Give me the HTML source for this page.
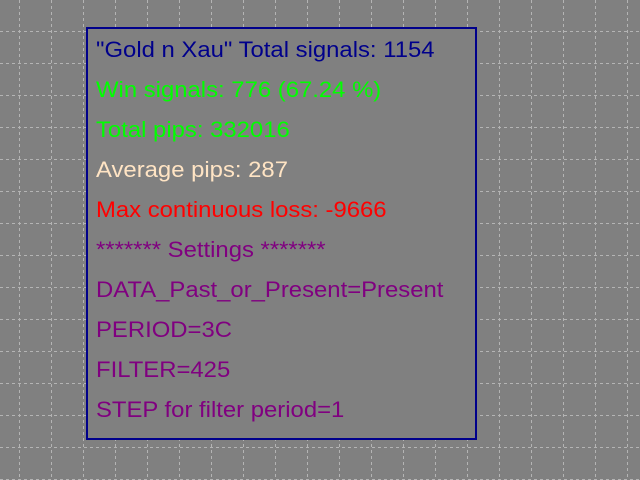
<!DOCTYPE html>
<html><head><style>
html,body{margin:0;padding:0;}
body{width:640px;height:480px;background:#808080;position:relative;overflow:hidden;}
svg{position:absolute;left:0;top:0;}
.box{position:absolute;left:86px;top:27px;width:387px;height:409px;border:2px solid #00008b;background:#808080;}
.t{position:absolute;left:96px;font-family:"Liberation Sans",Arial,sans-serif;font-size:22px;line-height:24px;white-space:nowrap;transform:scaleX(1.085);transform-origin:0 0;}
</style></head><body>
<svg width="640" height="480">
<g stroke="#b4b4b4" stroke-width="1" stroke-dasharray="3,3">
<line x1="19.5" y1="0" x2="19.5" y2="480"/><line x1="51.5" y1="0" x2="51.5" y2="480"/><line x1="83.5" y1="0" x2="83.5" y2="480"/><line x1="115.5" y1="0" x2="115.5" y2="480"/><line x1="147.5" y1="0" x2="147.5" y2="480"/><line x1="179.5" y1="0" x2="179.5" y2="480"/><line x1="211.5" y1="0" x2="211.5" y2="480"/><line x1="243.5" y1="0" x2="243.5" y2="480"/><line x1="275.5" y1="0" x2="275.5" y2="480"/><line x1="307.5" y1="0" x2="307.5" y2="480"/><line x1="339.5" y1="0" x2="339.5" y2="480"/><line x1="371.5" y1="0" x2="371.5" y2="480"/><line x1="403.5" y1="0" x2="403.5" y2="480"/><line x1="435.5" y1="0" x2="435.5" y2="480"/><line x1="467.5" y1="0" x2="467.5" y2="480"/><line x1="499.5" y1="0" x2="499.5" y2="480"/><line x1="531.5" y1="0" x2="531.5" y2="480"/><line x1="563.5" y1="0" x2="563.5" y2="480"/><line x1="595.5" y1="0" x2="595.5" y2="480"/><line x1="627.5" y1="0" x2="627.5" y2="480"/>
<line y1="31.5" x1="0" y2="31.5" x2="640"/><line y1="63.5" x1="0" y2="63.5" x2="640"/><line y1="95.5" x1="0" y2="95.5" x2="640"/><line y1="127.5" x1="0" y2="127.5" x2="640"/><line y1="159.5" x1="0" y2="159.5" x2="640"/><line y1="191.5" x1="0" y2="191.5" x2="640"/><line y1="223.5" x1="0" y2="223.5" x2="640"/><line y1="255.5" x1="0" y2="255.5" x2="640"/><line y1="287.5" x1="0" y2="287.5" x2="640"/><line y1="319.5" x1="0" y2="319.5" x2="640"/><line y1="351.5" x1="0" y2="351.5" x2="640"/><line y1="383.5" x1="0" y2="383.5" x2="640"/><line y1="415.5" x1="0" y2="415.5" x2="640"/><line y1="447.5" x1="0" y2="447.5" x2="640"/><line y1="479.5" x1="0" y2="479.5" x2="640"/>
</g></svg>
<div class="box"></div>
<div class="t" style="top:38px;color:#00008b">"Gold n Xau" Total signals: 1154</div>
<div class="t" style="top:78px;color:#00ff00">Win signals: 776 (67.24 %)</div>
<div class="t" style="top:118px;color:#00ff00">Total pips: 332016</div>
<div class="t" style="top:158px;color:#ffe4c4">Average pips: 287</div>
<div class="t" style="top:198px;color:#ff0000">Max continuous loss: -9666</div>
<div class="t" style="top:238px;color:#800080">******* Settings *******</div>
<div class="t" style="top:278px;color:#800080">DATA_Past_or_Present=Present</div>
<div class="t" style="top:318px;color:#800080">PERIOD=3C</div>
<div class="t" style="top:358px;color:#800080">FILTER=425</div>
<div class="t" style="top:398px;color:#800080">STEP for filter period=1</div>
</body></html>
